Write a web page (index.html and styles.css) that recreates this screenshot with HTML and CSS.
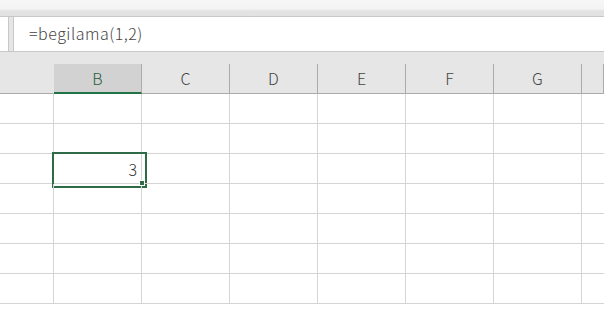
FILE: index.html
```html
<!DOCTYPE html>
<html lang="ja">

<head>
  <meta charset="UTF-8">
  <meta name="viewport" content="width=device-width, initial-scale=1.0">
  <title>Sheet</title>
  <link rel="stylesheet" href="styles.css">
</head>

<body>

  <div class="ribbon"></div>

  <div class="fbar">
    <div class="namebox"></div>
    <div class="fbar-gap"></div>
    <div class="formula">=begilama(1,2)</div>
  </div>

  <div class="spacer"></div>

  <div class="sheet">
    <div class="hd"></div>
    <div class="hd active">B</div>
    <div class="hd">C</div>
    <div class="hd">D</div>
    <div class="hd">E</div>
    <div class="hd">F</div>
    <div class="hd">G</div>
    <div class="hd"></div>

    <div class="cell"></div><div class="cell"></div><div class="cell"></div><div class="cell"></div><div class="cell"></div><div class="cell"></div><div class="cell"></div><div class="cell"></div>
    <div class="cell"></div><div class="cell"></div><div class="cell"></div><div class="cell"></div><div class="cell"></div><div class="cell"></div><div class="cell"></div><div class="cell"></div>
    <div class="cell"></div><div class="cell selected">3<span class="handle"></span></div><div class="cell"></div><div class="cell"></div><div class="cell"></div><div class="cell"></div><div class="cell"></div><div class="cell"></div>
    <div class="cell"></div><div class="cell"></div><div class="cell"></div><div class="cell"></div><div class="cell"></div><div class="cell"></div><div class="cell"></div><div class="cell"></div>
    <div class="cell"></div><div class="cell"></div><div class="cell"></div><div class="cell"></div><div class="cell"></div><div class="cell"></div><div class="cell"></div><div class="cell"></div>
    <div class="cell"></div><div class="cell"></div><div class="cell"></div><div class="cell"></div><div class="cell"></div><div class="cell"></div><div class="cell"></div><div class="cell"></div>
    <div class="cell"></div><div class="cell"></div><div class="cell"></div><div class="cell"></div><div class="cell"></div><div class="cell"></div><div class="cell"></div><div class="cell"></div>
  </div>

</body>

</html>
```

FILE: styles.css
```css
* {
  margin: 0;
  padding: 0;
  box-sizing: border-box;
}

body {
  width: 604px;
  height: 316px;
  overflow: hidden;
  background: #fff;
  font-family: "Noto Sans CJK JP", "Noto Sans", sans-serif;
  font-weight: 300;
  color: #333;
}

.ribbon {
  height: 16px;
  background: linear-gradient(#f6f6f6 0, #f3f3f3 55%, #e2e2e2 70%, #e2e2e2 100%);
}

.fbar {
  display: flex;
  height: 36px;
  border-top: 1px solid #c8c8c8;
  border-bottom: 1px solid #c8c8c8;
  background: #e6e6e6;
}

.fbar .namebox {
  width: 9px;
  background: #fff;
  border-right: 1px solid #c8c8c8;
}

.fbar .fbar-gap {
  width: 4px;
}

.fbar .formula {
  flex: 1;
  background: #fff;
  border-left: 1px solid #c8c8c8;
  padding-left: 15px;
  font-size: 16px;
  letter-spacing: 0.5px;
  line-height: 33px;
  color: #444;
}

.spacer {
  height: 12px;
  background: #e6e6e6;
}

.sheet {
  display: grid;
  grid-template-columns: 54px repeat(6, 88px) 1fr;
  grid-auto-rows: 30px;
}

.sheet .hd {
  background: #e6e6e6;
  border-right: 1px solid #ababab;
  border-bottom: 1px solid #ababab;
  display: flex;
  align-items: center;
  justify-content: center;
  font-size: 16px;
  color: #444;
  padding-bottom: 1px;
}

.sheet .hd:first-child {
  border-right-color: #e6e6e6;
}

.sheet .hd:last-child {
  border-right: 0;
}

.sheet .hd.active {
  background: #d2d2d2;
  color: #2b5f3f;
  border-bottom: 2px solid #217346;
  padding-bottom: 0;
}

.sheet .cell {
  border-right: 1px solid #d4d4d4;
  border-bottom: 1px solid #d4d4d4;
  position: relative;
  display: flex;
  align-items: center;
  justify-content: flex-end;
  padding-right: 4px;
  font-size: 16px;
  color: #333;
}

.sheet .cell:nth-child(8n) {
  border-right: 0;
}

.sheet .cell.selected::after {
  content: '';
  position: absolute;
  left: -2px;
  top: -2px;
  width: 91px;
  height: 32px;
  border: 2px solid #2e6b47;
}

.sheet .cell .handle {
  position: absolute;
  left: 85px;
  top: 26px;
  width: 6px;
  height: 6px;
  background: #2e6b47;
  border: 1px solid #fff;
  z-index: 1;
}
```
